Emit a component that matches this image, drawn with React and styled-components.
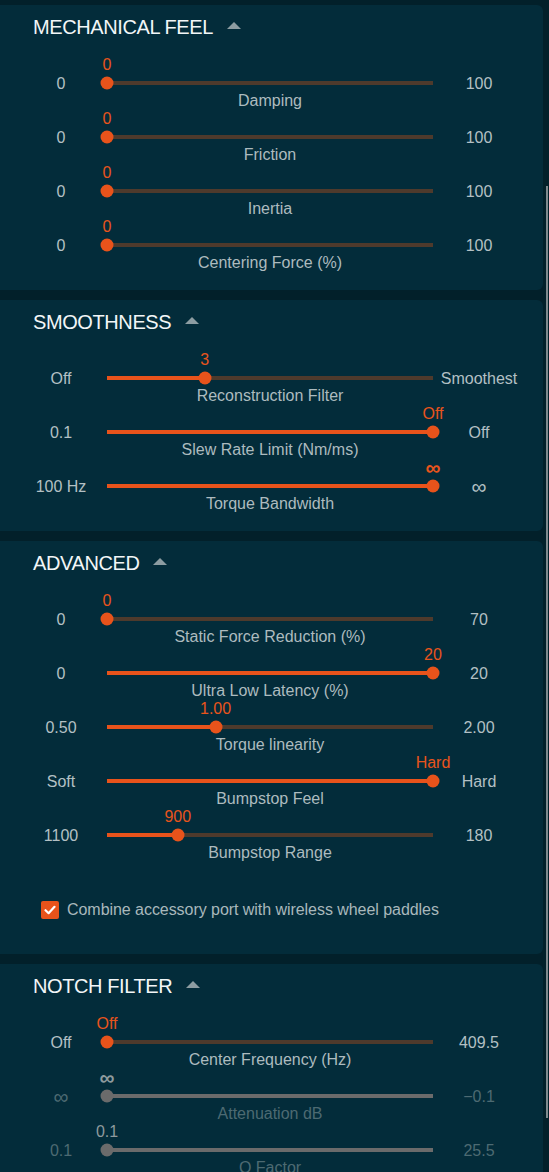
import React from 'react';
import styled, { createGlobalStyle } from 'styled-components';

const GlobalStyle = createGlobalStyle`
  html, body {
    margin: 0;
    padding: 0;
    background: #02202a;
  }
  body {
    font-family: "Liberation Sans", Arial, sans-serif;
    overflow: hidden;
  }
`;

const sections = [
  {
    title: 'MECHANICAL FEEL',
    sliders: [
      { name: 'Damping', min: '0', max: '100', value: '0', pos: 0 },
      { name: 'Friction', min: '0', max: '100', value: '0', pos: 0 },
      { name: 'Inertia', min: '0', max: '100', value: '0', pos: 0 },
      { name: 'Centering Force (%)', min: '0', max: '100', value: '0', pos: 0 },
    ],
  },
  {
    title: 'SMOOTHNESS',
    sliders: [
      { name: 'Reconstruction Filter', min: 'Off', max: 'Smoothest', value: '3', pos: 0.3 },
      { name: 'Slew Rate Limit (Nm/ms)', min: '0.1', max: 'Off', value: 'Off', pos: 1 },
      { name: 'Torque Bandwidth', min: '100 Hz', max: '∞', value: '∞', pos: 1 },
    ],
  },
  {
    title: 'ADVANCED',
    sliders: [
      { name: 'Static Force Reduction (%)', min: '0', max: '70', value: '0', pos: 0 },
      { name: 'Ultra Low Latency (%)', min: '0', max: '20', value: '20', pos: 1 },
      { name: 'Torque linearity', min: '0.50', max: '2.00', value: '1.00', pos: 0.333 },
      { name: 'Bumpstop Feel', min: 'Soft', max: 'Hard', value: 'Hard', pos: 1 },
      { name: 'Bumpstop Range', min: '1100', max: '180', value: '900', pos: 0.217 },
    ],
    checkbox: 'Combine accessory port with wireless wheel paddles',
  },
  {
    title: 'NOTCH FILTER',
    sliders: [
      { name: 'Center Frequency (Hz)', min: 'Off', max: '409.5', value: 'Off', pos: 0 },
      { name: 'Attenuation dB', min: '∞', max: '−0.1', value: '∞', pos: 0, disabled: true },
      { name: 'Q Factor', min: '0.1', max: '25.5', value: '0.1', pos: 0, disabled: true },
    ],
  },
];

// the infinity glyph is drawn a good deal bigger than the digits
const show = (text, bold) =>
  text === '∞' ? <Infinity $bold={bold}>∞</Infinity> : text;

const Slider = ({ slider }) => {
  const { name, min, max, value, pos, disabled } = slider;
  const pct = `${pos * 100}%`;
  return (
    <SliderRow>
      <ValueCell>
        <ValueText $disabled={disabled} style={{ left: pct }}>{show(value, true)}</ValueText>
      </ValueCell>
      <MinLabel $disabled={disabled}>{show(min)}</MinLabel>
      <Track $disabled={disabled}>
        <Fill style={{ width: pct }} />
        <Thumb $disabled={disabled} style={{ left: pct }} />
      </Track>
      <MaxLabel $disabled={disabled}>{show(max)}</MaxLabel>
      <NameLabel $disabled={disabled}>{name}</NameLabel>
    </SliderRow>
  );
};

const App = () => (
  <>
    <GlobalStyle />
    <Page>
      {sections.map((section) => (
        <Card key={section.title}>
          <Header>
            <Title>{section.title}</Title>
            <Caret />
          </Header>
          {section.sliders.map((s) => (
            <Slider key={s.name} slider={s} />
          ))}
          {section.checkbox && (
            <CheckRow>
              <CheckBox>
                <svg width="12" height="10" viewBox="0 0 12 10">
                  <path d="M1.5 5.2 L4.6 8.2 L10.5 1.8" fill="none" stroke="#fff" strokeWidth="2.2" strokeLinecap="round" strokeLinejoin="round" />
                </svg>
              </CheckBox>
              <CheckText>{section.checkbox}</CheckText>
            </CheckRow>
          )}
        </Card>
      ))}
    </Page>
    <ScrollThumb />
  </>
);

const Page = styled.div`
  display: flex;
  flex-direction: column;
  gap: 10px;
  padding: 5px 6px 0 0;
`;

const Card = styled.section`
  background: #032c3a;
  border-radius: 0 6px 6px 0;
  padding: 9px 0 16px 0;
`;

const Header = styled.div`
  display: flex;
  align-items: center;
  gap: 14px;
  height: 26px;
  margin: 0 0 18px 33px;
`;

const Title = styled.h2`
  margin: 0;
  font-size: 20px;
  font-weight: 400;
  color: #f2f6f7;
  letter-spacing: -0.4px;
`;

const Caret = styled.span`
  width: 0;
  height: 0;
  border-left: 7px solid transparent;
  border-right: 7px solid transparent;
  border-bottom: 7px solid #8d9da2;
  margin-top: -3px;
`;

const SliderRow = styled.div`
  display: grid;
  grid-template-columns: 87px 326px 92px;
  grid-template-rows: 16px 18px 20px;
  margin-left: 20px;
  width: 505px;
`;

const ValueCell = styled.div`
  grid-column: 2;
  grid-row: 1;
  position: relative;
`;

const ValueText = styled.span`
  position: absolute;
  top: 0;
  transform: translateX(-50%);
  font-size: 16px;
  line-height: 14px;
  color: ${(p) => (p.$disabled ? '#8e9a9d' : '#e8541c')};
  white-space: nowrap;
`;

const Infinity = styled.span`
  font-size: 21px;
  font-weight: ${(p) => (p.$bold ? 700 : 400)};
  line-height: 14px;
`;

const EndLabel = styled.div`
  grid-row: 2;
  display: flex;
  align-items: center;
  justify-content: center;
  padding-top: 1px;
  font-size: 16px;
  color: ${(p) => (p.$disabled ? '#4d6a72' : '#b3c0c4')};
  white-space: nowrap;
`;

const MinLabel = styled(EndLabel)`
  grid-column: 1;
  padding-right: 5px;
`;

const MaxLabel = styled(EndLabel)`
  grid-column: 3;
`;

const Track = styled.div`
  grid-column: 2;
  grid-row: 2;
  align-self: center;
  position: relative;
  height: 4px;
  background: ${(p) => (p.$disabled ? '#6b6b6b' : '#4e3a2c')};
`;

const Fill = styled.div`
  height: 100%;
  background: #e8531b;
`;

const Thumb = styled.div`
  position: absolute;
  top: 50%;
  width: 13px;
  height: 13px;
  border-radius: 50%;
  background: ${(p) => (p.$disabled ? '#6b6b6b' : '#e8531b')};
  transform: translate(-50%, -50%);
`;

const NameLabel = styled.div`
  grid-column: 2;
  grid-row: 3;
  text-align: center;
  font-size: 16px;
  line-height: 17px;
  color: ${(p) => (p.$disabled ? '#4d6a72' : '#adbbbf')};
  white-space: nowrap;
`;

const CheckRow = styled.label`
  display: flex;
  align-items: center;
  gap: 8px;
  margin: 37px 0 19px 41px;
`;

const CheckBox = styled.span`
  display: flex;
  align-items: center;
  justify-content: center;
  width: 18px;
  height: 18px;
  border-radius: 2px;
  background: #e8531b;
`;

const CheckText = styled.span`
  font-size: 16px;
  letter-spacing: -0.05px;
  color: #a9b8bc;
`;

const ScrollThumb = styled.div`
  position: fixed;
  right: 1px;
  top: 186px;
  width: 2px;
  height: 932px;
  background: #7e8b8f;
`;

export default App;
